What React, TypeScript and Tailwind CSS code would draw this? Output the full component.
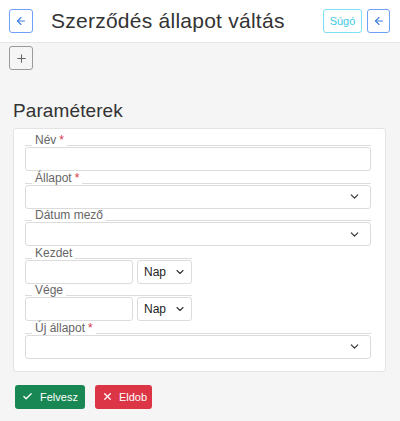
import React from 'react';
import { ArrowLeft, Plus, ChevronDown, Check, X } from 'lucide-react';

function FieldLabel({ text, required }: { text: string; required?: boolean }) {
  return (
    <div className="flex items-end h-[13px]">
      <div className="w-[7px] border-b border-[#dcdcdc] mb-[1px]" />
      <span className="px-[3px] text-[12px] leading-[13px] text-[#666]">
        {text}
        {required && <span className="text-[#dc3545] ml-[3px]">*</span>}
      </span>
      <div className="flex-1 border-b border-[#dcdcdc] mb-[1px]" />
    </div>
  );
}

function TextField({ label, required }: { label: string; required?: boolean }) {
  return (
    <div className="flex flex-col">
      <FieldLabel text={label} required={required} />
      <div className="h-[24px] border border-[#dcdcdc] rounded-[3px] bg-white" />
    </div>
  );
}

function SelectField({ label, required }: { label: string; required?: boolean }) {
  return (
    <div className="flex flex-col">
      <FieldLabel text={label} required={required} />
      <div className="h-[24px] border border-[#dcdcdc] rounded-[3px] bg-white flex items-center justify-end pr-[9px]">
        <ChevronDown className="w-[13px] h-[13px] text-[#333]" strokeWidth={2.2} />
      </div>
    </div>
  );
}

function PeriodField({ label }: { label: string }) {
  return (
    <div className="flex flex-col w-[167px]">
      <FieldLabel text={label} />
      <div className="flex gap-[4px]">
        <div className="w-[108px] h-[24px] border border-[#dcdcdc] rounded-[3px] bg-white" />
        <div className="w-[55px] h-[24px] border border-[#dcdcdc] rounded-[3px] bg-white flex items-center pl-[6px] gap-[8px] text-[12px] text-[#222]">
          Nap
          <ChevronDown className="w-[12px] h-[12px] text-[#333]" strokeWidth={2.2} />
        </div>
      </div>
    </div>
  );
}

export default function App() {
  return (
    <div className="w-[400px] h-[421px] bg-[#f5f5f5] font-['Liberation_Sans',Arial,sans-serif]">
      {/* Header */}
      <div className="h-[43px] bg-white border-b border-[#e6e6e6] flex items-center pl-[9px] pr-[10px]">
        <button className="w-[24px] h-[24px] border border-[#6ea0f5] rounded-[3px] flex items-center justify-center">
          <ArrowLeft className="w-[12px] h-[12px] text-[#3b7ddd]" strokeWidth={2.2} />
        </button>
        <h1 className="ml-[18px] text-[21px] text-[#333] tracking-[0.25px]">Szerződés állapot váltás</h1>
        <div className="ml-auto flex gap-[5px]">
          <button className="w-[39px] h-[24px] border border-[#7be0f3] rounded-[3px] text-[11px] text-[#3fc8e4]">
            Súgó
          </button>
          <button className="w-[23px] h-[24px] border border-[#6ea0f5] rounded-[3px] flex items-center justify-center">
            <ArrowLeft className="w-[12px] h-[12px] text-[#3b7ddd]" strokeWidth={2.2} />
          </button>
        </div>
      </div>

      <div className="px-[9px] pt-[3px]">
        <button className="w-[24px] h-[24px] border border-[#9a9a9a] rounded-[3px] flex items-center justify-center">
          <Plus className="w-[13px] h-[13px] text-[#666]" strokeWidth={2} />
        </button>
      </div>

      <div className="px-[13px] pr-[14px]">
        <h2 className="mt-[29px] text-[19px] leading-[24px] text-[#333] tracking-[0.1px]">Paraméterek</h2>
        <div className="mt-[5px] bg-white border border-[#e3e3e3] rounded-[3px] pl-[11px] pr-[14px] pt-[5px] pb-[12px] flex flex-col gap-[0.6px]">
          <TextField label="Név" required />
          <SelectField label="Állapot" required />
          <SelectField label="Dátum mező" />
          <PeriodField label="Kezdet" />
          <PeriodField label="Vége" />
          <SelectField label="Új állapot" required />
        </div>
        <div className="mt-[13px] flex gap-[10px] pl-[2px]">
          <button className="h-[24px] px-[7px] bg-[#198754] rounded-[3px] text-white text-[11px] flex items-center gap-[7px]">
            <Check className="w-[11px] h-[11px]" strokeWidth={2.8} />
            Felvesz
          </button>
          <button className="h-[24px] pl-[7px] pr-[5px] bg-[#dc3545] rounded-[3px] text-white text-[11px] flex items-center gap-[6px]">
            <X className="w-[11px] h-[11px]" strokeWidth={2.8} />
            Eldob
          </button>
        </div>
      </div>
    </div>
  );
}
